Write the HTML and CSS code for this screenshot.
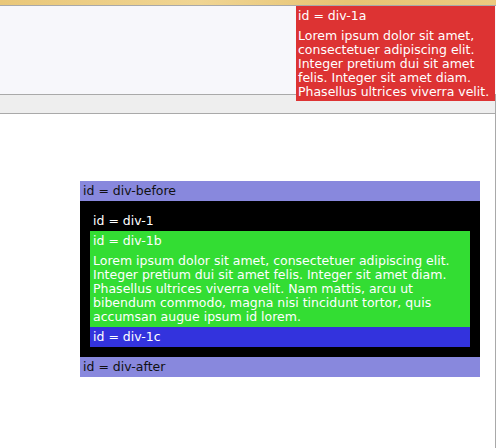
FILE: index.html
```html
<!DOCTYPE html>
<html>
<head>
<meta charset="utf-8">
<link rel="stylesheet" href="styles.css">
</head>
<body>
<div class="frame">
  <div class="topbar"></div>
  <div class="pane"></div>
  <div class="band"></div>
  <div class="content">
    <div class="stack">
      <div class="bar lav">id = div-before</div>
      <div class="black">
        <div class="line">id = div-1</div>
        <div class="green">
          <div class="line">id = div-1b</div>
          <p class="para">Lorem ipsum dolor sit amet, consectetuer adipiscing elit. Integer pretium dui sit amet felis. Integer sit amet diam. Phasellus ultrices viverra velit. Nam mattis, arcu ut bibendum commodo, magna nisi tincidunt tortor, quis accumsan augue ipsum id lorem.</p>
        </div>
        <div class="bar blue">id = div-1c</div>
      </div>
      <div class="bar lav">id = div-after</div>
    </div>
  </div>
  <div class="red">
    <div class="line">id = div-1a</div>
    <p class="para">Lorem ipsum dolor sit amet, consectetuer adipiscing elit. Integer pretium dui sit amet felis. Integer sit amet diam. Phasellus ultrices viverra velit.</p>
  </div>
</div>
</body>
</html>
```
FILE: styles.css
```css
html, body {
  margin: 0;
  padding: 0;
  background: #fff;
}
body {
  font-family: "DejaVu Sans", sans-serif;
  font-size: 12.5px;
  line-height: 14px;
}
.frame {
  position: relative;
  width: 496px;
  height: 448px;
  overflow: hidden;
}
.topbar {
  height: 5px;
  background: linear-gradient(90deg, #e9c779, #f0d593 40%, #e7c474 70%, #ecca80);
  border-bottom: 1px solid #a9a9a9;
}
.pane {
  height: 88px;
  background: #f7f7fb;
  border-bottom: 1px solid #a9a9a9;
}
.band {
  height: 18px;
  background: #eeeeee;
  border-bottom: 1px solid #a9a9a9;
  border-right: 1px solid #a9a9a9;
}
.content {
  height: 334px;
  border-right: 1px solid #a9a9a9;
  padding-top: 67px;
  padding-left: 80px;
  box-sizing: border-box;
}
.stack {
  width: 400px;
}
.bar {
  padding: 3px;
}
.lav {
  background: #8888dd;
  color: #111;
}
.black {
  background: #000;
  padding: 10px;
  color: #fff;
}
.black > .line {
  padding: 3px;
}
.green {
  background: #33dd33;
  padding: 3px;
}
.blue {
  background: #3333dd;
  color: #fff;
}
.para {
  margin: 6px 0 0;
}
.red {
  position: absolute;
  top: 6px;
  left: 296px;
  width: 195px;
  background: #dd3333;
  color: #fff;
  padding: 3px 2px 2px 2px;
}
```
